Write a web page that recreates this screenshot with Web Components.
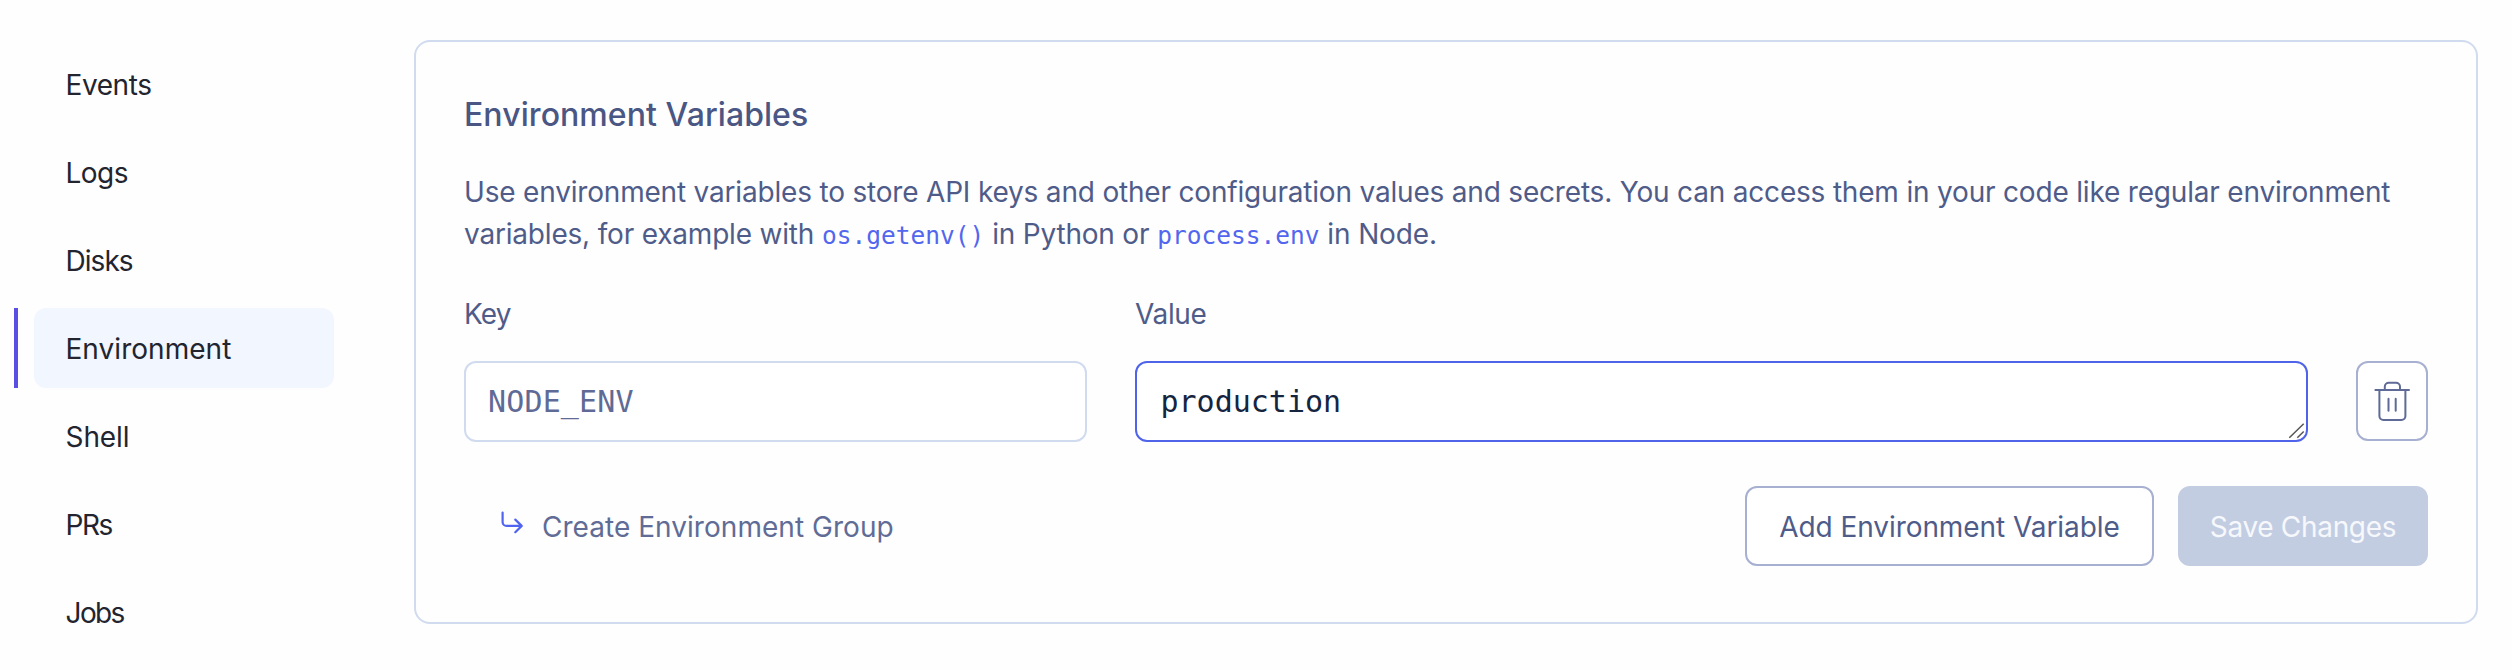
<!DOCTYPE html>
<html lang="en">
<head>
<meta charset="utf-8">
<title>Environment</title>
<style>
  body { margin: 0; background: #fefefe; font-family: Inter, "Liberation Sans", sans-serif; font-size: 28px; font-weight: 400; color: #4f5c89; }
</style>
</head>
<body>
<settings-page>
  <side-nav slot="nav">
    <nav-item style="--track:-.41px">Events</nav-item>
    <nav-item style="--track:-.5px">Logs</nav-item>
    <nav-item style="--track:-.95px">Disks</nav-item>
    <nav-item active style="--track:.04px">Environment</nav-item>
    <nav-item style="--track:-.08px">Shell</nav-item>
    <nav-item style="--track:-1.4px">PRs</nav-item>
    <nav-item style="--track:-1.6px">Jobs</nav-item>
  </side-nav>
  <env-panel>
    <span slot="title">Environment Variables</span>
    <span slot="about"><text-run style="--track:-.188px">Use environment variables to store API keys and other configuration values and secrets. You can access them in your code like regular environment</text-run> <text-run style="--track:-.19px">variables, for example with</text-run> <code-run>os.getenv()</code-run> <text-run style="--track:-.2px">in Python or</text-run> <code-run>process.env</code-run> <text-run style="--track:-.12px">in Node.</text-run></span>
    <env-field slot="fields" label="Key" style="--track:-.9px;--mono-track:.15px">NODE_ENV</env-field>
    <env-field slot="fields" label="Value" focused style="--track:-.36px">production</env-field>
    <trash-button slot="fields"></trash-button>
    <group-link slot="actions">Create Environment Group</group-link>
    <ui-button slot="actions" style="--track:-.07px;--w:409px">Add Environment Variable</ui-button>
    <ui-button slot="actions" disabled style="--track:-.32px;--w:250px">Save Changes</ui-button>
  </env-panel>
</settings-page>
<script>
const define = (name, html) => customElements.define(name, class extends HTMLElement {
  constructor() {
    super();
    const t = document.createElement('template');
    t.innerHTML = html;
    this.attachShadow({ mode: 'open' }).append(t.content.cloneNode(true));
  }
  connectedCallback() {
    const l = this.shadowRoot.querySelector('.label');
    if (l) l.textContent = this.getAttribute('label');
  }
});

define('settings-page', `<style>
  :host { display: grid; grid-template-columns: 320px 2064px; column-gap: 80px; padding: 40px 34px 0 14px; height: 670px; box-sizing: border-box; overflow: hidden; align-items: start; }
  </style><slot name="nav"></slot><slot></slot>`);

define('side-nav', `<style>
  :host { display: flex; flex-direction: column; gap: 8px; padding-top: 4px; }
  </style><slot></slot>`);

define('nav-item', `<style>
  :host { display: flex; height: 80px; gap: 16px; color: #22252f; letter-spacing: var(--track, 0); }
  .bar { width: 4px; }
  .body { flex: 1; display: flex; align-items: center; padding: 2px 0 0 31.5px; box-sizing: border-box; border-radius: 12px; }
  :host([active]) .bar { background: #594fe3; }
  :host([active]) .body { background: #f1f6ff; }
  </style><div class="bar"></div><div class="body"><slot></slot></div>`);

define('env-panel', `<style>
  :host { display: block; height: 584px; box-sizing: border-box; border: 2px solid #d1dbef; border-radius: 16px; padding: 48px; }
  h2 { margin: 0; height: 47px; padding-top: 1px; line-height: 48px; font-size: 32px; font-weight: 500; color: #4a5683; letter-spacing: .073px; }
  p { margin: 33px 0 38px; line-height: 42px; height: 84px; }
  .fields { display: grid; grid-template-columns: 623px 1173px 72px; column-gap: 48px; align-items: end; height: 149px; }
  .actions { display: flex; gap: 24px; margin-top: 44px; }
  </style>
  <h2><slot name="title"></slot></h2>
  <p><slot name="about"></slot></p>
  <div class="fields"><slot name="fields"></slot></div>
  <div class="actions"><slot name="actions"></slot></div>`);

define('text-run', `<style>:host { display: inline; letter-spacing: var(--track, 0); }</style><slot></slot>`);

define('code-run', `<style>
  :host { display: inline; font-family: "DejaVu Sans Mono", monospace; font-size: 24.5px; line-height: 1; color: #5266ee; }
  </style><slot></slot>`);

define('env-field', `<style>
  :host { display: block; height: 149px; }
  .label { height: 42px; line-height: 42px; margin-bottom: 26px; letter-spacing: var(--track, 0); }
  .box { position: relative; display: flex; align-items: center; height: 81px; box-sizing: border-box; border: 2px solid #d1dbef; border-radius: 12px; padding: 0 22px; background: #fff;
    font-family: "DejaVu Sans Mono", monospace; font-size: 30px; color: #5f6b96; letter-spacing: var(--mono-track, 0); }
  :host([focused]) .box { border-color: #5064ea; color: #152540; padding-left: 23.5px; }
  svg { display: none; position: absolute; right: 0; bottom: 0; }
  :host([focused]) svg { display: block; }
  </style>
  <div class="label"></div>
  <div class="box"><slot></slot>
    <svg width="20" height="20" fill="none" stroke="#555" stroke-width="1.5"><path d="M3.3 17.7 17.7 3.8M11.3 17.7l6.4-6.2"/></svg>
  </div>`);

define('trash-button', `<style>
  :host { display: flex; align-self: end; align-items: center; justify-content: center; width: 72px; height: 80px; margin-bottom: 1px; box-sizing: border-box; border: 2px solid #a7b0d1; border-radius: 12px; background: #fff; }
  </style>
  <svg width="48" height="48" fill="none" stroke="#5f6b96" stroke-width="2" stroke-linecap="round" stroke-linejoin="round">
    <path d="M7.4 13H41M11.4 13v26a4 4 0 0 0 4 4h18a4 4 0 0 0 4-4V13M16.8 13V9.700a4 4 0 0 1 4-4h7.200a4 4 0 0 1 4 4V13M20.500 21.700v12M27.700 21.700v12"/>
  </svg>`);

define('group-link', `<style>
  :host { display: flex; flex: 1; align-items: center; height: 80px; box-sizing: border-box; color: #606c96; letter-spacing: .04px; }
  svg { margin: -8px 18px 0 36px; }
  span { padding-top: 2px; }
  </style>
  <svg width="24" height="24" fill="none" stroke="#5064f0" stroke-width="2.2" stroke-linecap="round" stroke-linejoin="round">
    <path d="M2.600 2.500v9.400a4 4 0 0 0 4 4H21.500M15.300 9.600l6.400 6.300-6.400 6.300"/>
  </svg><span><slot></slot></span>`);

define('ui-button', `<style>
  :host { display: flex; align-items: center; justify-content: center; width: var(--w); height: 80px; box-sizing: border-box; border: 2px solid #a7b0d1; border-radius: 12px; padding-top: 2px; background: #fff; letter-spacing: var(--track, 0); white-space: nowrap; }
  :host([disabled]) { background: #c3cde2; border-color: #c3cde2; color: #f6f8fc; }
  </style><slot></slot>`);
</script>
</body>
</html>
